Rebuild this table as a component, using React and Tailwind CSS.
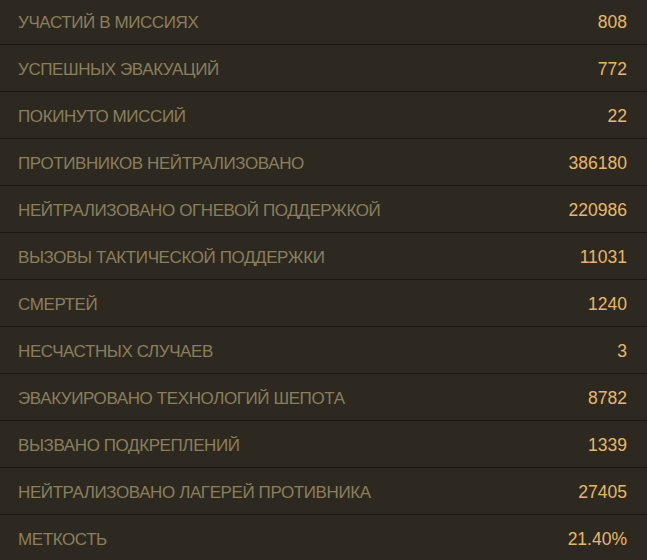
const STATS = [
  ['УЧАСТИЙ В МИССИЯХ', '808'],
  ['УСПЕШНЫХ ЭВАКУАЦИЙ', '772'],
  ['ПОКИНУТО МИССИЙ', '22'],
  ['ПРОТИВНИКОВ НЕЙТРАЛИЗОВАНО', '386180'],
  ['НЕЙТРАЛИЗОВАНО ОГНЕВОЙ ПОДДЕРЖКОЙ', '220986'],
  ['ВЫЗОВЫ ТАКТИЧЕСКОЙ ПОДДЕРЖКИ', '11031'],
  ['СМЕРТЕЙ', '1240'],
  ['НЕСЧАСТНЫХ СЛУЧАЕВ', '3'],
  ['ЭВАКУИРОВАНО ТЕХНОЛОГИЙ ШЕПОТА', '8782'],
  ['ВЫЗВАНО ПОДКРЕПЛЕНИЙ', '1339'],
  ['НЕЙТРАЛИЗОВАНО ЛАГЕРЕЙ ПРОТИВНИКА', '27405'],
  ['МЕТКОСТЬ', '21.40%'],
]

export default function App() {
  return (
    <div
      className="w-[647px] h-[560px] overflow-hidden bg-[#2d2920]"
      style={{ fontFamily: '"Liberation Sans", Arial, sans-serif' }}
    >
      <div className="-mt-[2px] flex flex-col">
        {STATS.map(([label, value]) => (
          <div
            key={label}
            className="h-[47px] shrink-0 flex items-center justify-between pt-[3px] pl-[18px] pr-[20px] border-b border-[#1a1712]"
          >
            <span className="text-[17px] text-[#8a7f5c] tracking-[-0.4px]">{label}</span>
            <span className="text-[17.5px] text-[#e6b866]">{value}</span>
          </div>
        ))}
      </div>
    </div>
  )
}
